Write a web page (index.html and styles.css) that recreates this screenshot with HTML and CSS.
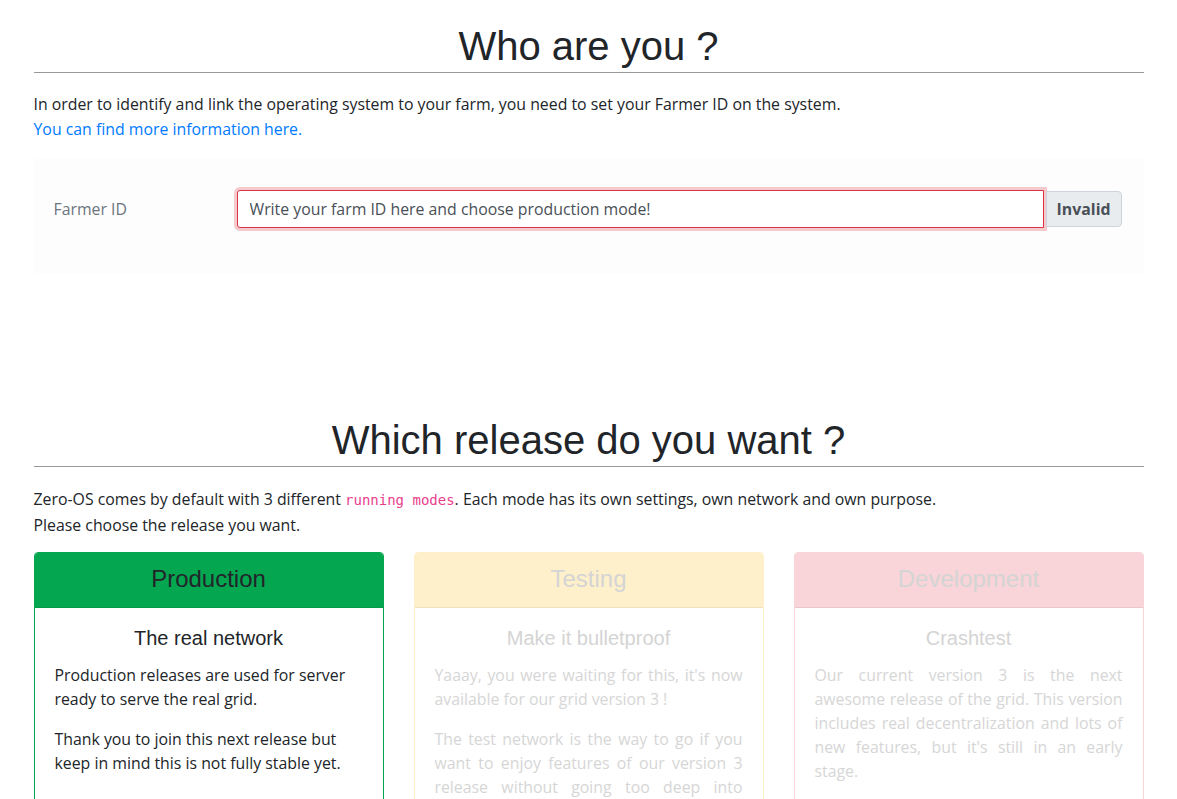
FILE: index.html
```html
<!DOCTYPE html>
<html>
<head>
<meta charset="utf-8">
<link rel="stylesheet" href="styles.css">
</head>
<body>
<div class="container">
  <section class="section">
    <h1 class="title">Who are you ?</h1>
    <p class="intro">In order to identify and link the operating system to your farm, you need to set your Farmer ID on the system.<br><a href="#" class="link">You can find more information here.</a></p>
    <div class="formbox">
      <div class="form-row">
        <label class="label">Farmer ID</label>
        <div class="input-col">
          <div class="input-group">
            <input class="input invalid" type="text" value="Write your farm ID here and choose production mode!">
            <span class="append">Invalid</span>
          </div>
        </div>
      </div>
    </div>
  </section>

  <section class="section second">
    <h1 class="title">Which release do you want ?</h1>
    <p class="intro intro2">Zero-OS comes by default with 3 different <code class="code">running modes</code>. Each mode has its own settings, own network and own purpose.<br>Please choose the release you want.</p>
    <div class="cards">
      <div class="card prod">
        <div class="card-header">Production</div>
        <div class="card-body">
          <h4 class="card-title">The real network</h4>
          <p>Production releases are used for server ready to serve the real grid.</p>
          <p>Thank you to join this next release but keep in mind this is not fully stable yet.</p>
        </div>
      </div>
      <div class="card test faded">
        <div class="card-header">Testing</div>
        <div class="card-body justify">
          <h4 class="card-title">Make it bulletproof</h4>
          <p>Yaaay, you were waiting for this, it's now available for our grid version 3 !</p>
          <p>The test network is the way to go if you want to enjoy features of our version 3 release without going too deep into development.</p>
        </div>
      </div>
      <div class="card dev faded">
        <div class="card-header">Development</div>
        <div class="card-body justify">
          <h4 class="card-title">Crashtest</h4>
          <p>Our current version 3 is the next awesome release of the grid. This version includes real decentralization and lots of new features, but it's still in an early stage.</p>
        </div>
      </div>
    </div>
  </section>
</div>
</body>
</html>
```

FILE: styles.css
```css
html, body {
  margin: 0;
  padding: 0;
  background: #fff;
}
body {
  font-family: "Open Sans", "Noto Sans", sans-serif;
  font-size: 15.85px;
  line-height: 24px;
  color: #212529;
}
.container {
  max-width: 1110px;
  margin: 0 auto;
  padding: 0 15px;
}
.section {
  padding-top: 22px;
}
.second {
  padding-top: 142px;
}
.title {
  font-family: "Liberation Sans", Arial, sans-serif;
  font-weight: 400;
  font-size: 40px;
  line-height: 48px;
  text-align: center;
  margin: 0;
  padding-bottom: 2px;
  border-bottom: 1px solid #999;
  color: #212529;
}
.intro {
  margin: 19px 0 0;
  line-height: 25px;
}
.intro2 {
  margin-top: 20px;
}
.link {
  color: #007bff;
  text-decoration: none;
}
.code {
  font-family: "DejaVu Sans Mono", monospace;
  font-size: 14px;
  color: #e83e8c;
}
.formbox {
  margin-top: 16px;
  background: #fdfdfd;
  padding: 32px 20px 46px;
}
.form-row {
  display: flex;
  align-items: center;
}
.label {
  width: 183px;
  color: #6c757d;
}
.input-col {
  flex: 1;
}
.input-group {
  display: flex;
  align-items: stretch;
}
.input {
  flex: 1;
  height: 38px;
  box-sizing: border-box;
  font: inherit;
  color: #495057;
  padding: 6px 12px;
  border: 1px solid #dc3545;
  border-radius: 3px 0 0 3px;
  box-shadow: 0 0 0 3px rgba(220,53,69,.25);
  outline: none;
  margin-right: 2px;
}
.append {
  display: flex;
  align-items: center;
  padding: 0 10px;
  background: #e9ecef;
  border: 1px solid #ced4da;
  border-radius: 0 4px 4px 0;
  color: #495057;
  font-weight: 700;
  margin: 1px 2px 1px 0;
}
.cards {
  margin-top: 14px;
  display: grid;
  grid-template-columns: repeat(3, 1fr);
  gap: 30px;
}
.card {
  border: 1px solid;
  border-radius: 4px;
  overflow: hidden;
}
.card-header {
  font-family: "Liberation Sans", Arial, sans-serif;
  font-size: 24px;
  text-align: center;
  height: 54px;
  line-height: 52px;
  border-bottom: 1px solid rgba(0,0,0,.06);
}
.card-body {
  padding: 18px 20px 0;
}
.card-title {
  font-family: "Liberation Sans", Arial, sans-serif;
  font-weight: 400;
  font-size: 20px;
  text-align: center;
  margin: 0 0 13px;
}
.card-body p {
  margin: 0 0 16px;
}
.justify p {
  text-align: justify;
}
.prod {
  border-color: #05a650;
}
.prod .card-header {
  background: #05a650;
  color: #212529;
}
.test {
  border-color: #fff0c8;
}
.test .card-header {
  background: #fff0cc;
}
.dev {
  border-color: #f9d3d8;
}
.dev .card-header {
  background: #f9d4d8;
}
.faded {
  color: #d6d6d6;
}
.faded .card-header,
.faded .card-title {
  color: #d4d4d4;
}
```
